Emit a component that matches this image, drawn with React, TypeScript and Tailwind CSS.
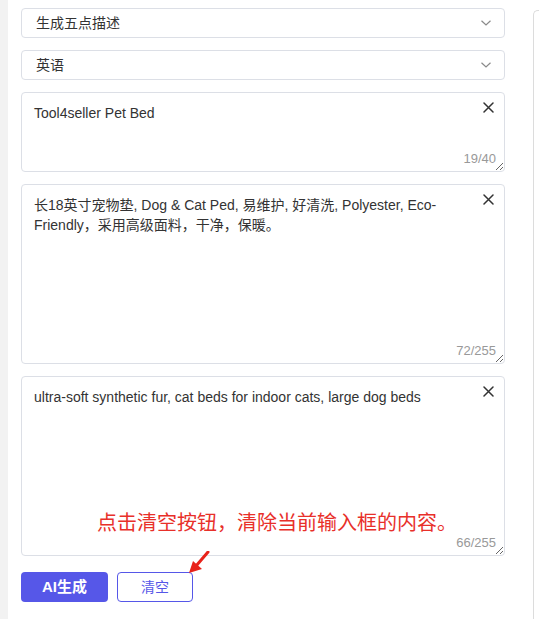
import React from "react";

const font = {
  fontFamily: '"Liberation Sans", "Noto Sans CJK SC", Arial, sans-serif',
};

function Chevron() {
  return (
    <svg width="12" height="8" viewBox="0 0 12 8" className="shrink-0">
      <path d="M1.5 1.8 L6 6 L10.5 1.8" fill="none" stroke="#8a8a8a" strokeWidth="1.2" />
    </svg>
  );
}

function CloseIcon() {
  return (
    <svg width="11" height="11" viewBox="0 0 11 11">
      <path d="M1 1 L10 10 M10 1 L1 10" stroke="#333" strokeWidth="1.5" strokeLinecap="round" />
    </svg>
  );
}

function SelectBox({ label }: { label: string }) {
  return (
    <div className="flex h-[30px] items-center justify-between rounded-[4px] border border-[#dcdfe6] bg-white pl-[14px] pr-[12px] text-[14px] text-[#333]">
      <span>{label}</span>
      <Chevron />
    </div>
  );
}

function TextBox({
  value,
  count,
  height,
  children,
}: {
  value: string;
  count: string;
  height: string;
  children?: React.ReactNode;
}) {
  return (
    <div className={`relative ${height}`}>
      <textarea
        defaultValue={value}
        style={font}
        className="block h-full w-full resize-y rounded-[4px] border border-[#dcdfe6] bg-white pb-[24px] pl-[12px] pr-[36px] pt-[10px] text-[14px] leading-[20px] text-[#333] outline-none"
      />
      <button className="absolute right-[11px] top-[9px] flex h-[12px] w-[12px] items-center justify-center">
        <CloseIcon />
      </button>
      <span className="pointer-events-none absolute bottom-[5px] right-[9px] text-[13px] leading-[16px] text-[#999]">
        {count}
      </span>
      {children}
    </div>
  );
}

export default function App() {
  return (
    <div style={font} className="flex h-[619px] w-[539px] overflow-hidden bg-white">
      <div className="w-[8px] shrink-0 bg-[#f2f2f2]" />
      <div className="ml-[13px] flex w-[484px] shrink-0 flex-col pt-[8px]">
        <div className="flex flex-col gap-[12px]">
          <SelectBox label="生成五点描述" />
          <SelectBox label="英语" />
          <TextBox value="Tool4seller Pet Bed" count="19/40" height="h-[80px]" />
          <TextBox
            value="长18英寸宠物垫, Dog & Cat Ped, 易维护, 好清洗, Polyester, Eco-Friendly，采用高级面料，干净，保暖。"
            count="72/255"
            height="h-[180px]"
          />
          <TextBox
            value="ultra-soft synthetic fur, cat beds for indoor cats, large dog beds"
            count="66/255"
            height="h-[180px]"
          >
            <span className="pointer-events-none absolute left-[76px] top-[134px] text-[20px] leading-[26px] text-[#e8302a]">
              点击清空按钮，清除当前输入框的内容。
            </span>
          </TextBox>
        </div>
        <div className="relative mt-[16px] flex gap-[9px]">
          <button className="flex h-[30px] w-[87px] items-center justify-center rounded-[4px] bg-[#5657e8] text-[15px] font-bold text-white">
            AI生成
          </button>
          <button className="flex h-[30px] w-[76px] items-center justify-center rounded-[4px] border border-[#5657e8] bg-white text-[14px] text-[#5657e8]">
            清空
          </button>
          <svg
            className="absolute left-[164px] top-[-21px]"
            width="26"
            height="26"
            viewBox="0 0 26 26"
          >
            <path d="M23 1 L11 15" stroke="#e8221a" strokeWidth="3" strokeLinecap="round" />
            <path d="M4 22 L8 10 L17 18 Z" fill="#e8221a" />
          </svg>
        </div>
      </div>
      <div className="ml-[28px] mt-[10px] w-[40px] shrink-0 rounded-tl-[5px] border-l border-t border-[#dcdcdc]" />
    </div>
  );
}
